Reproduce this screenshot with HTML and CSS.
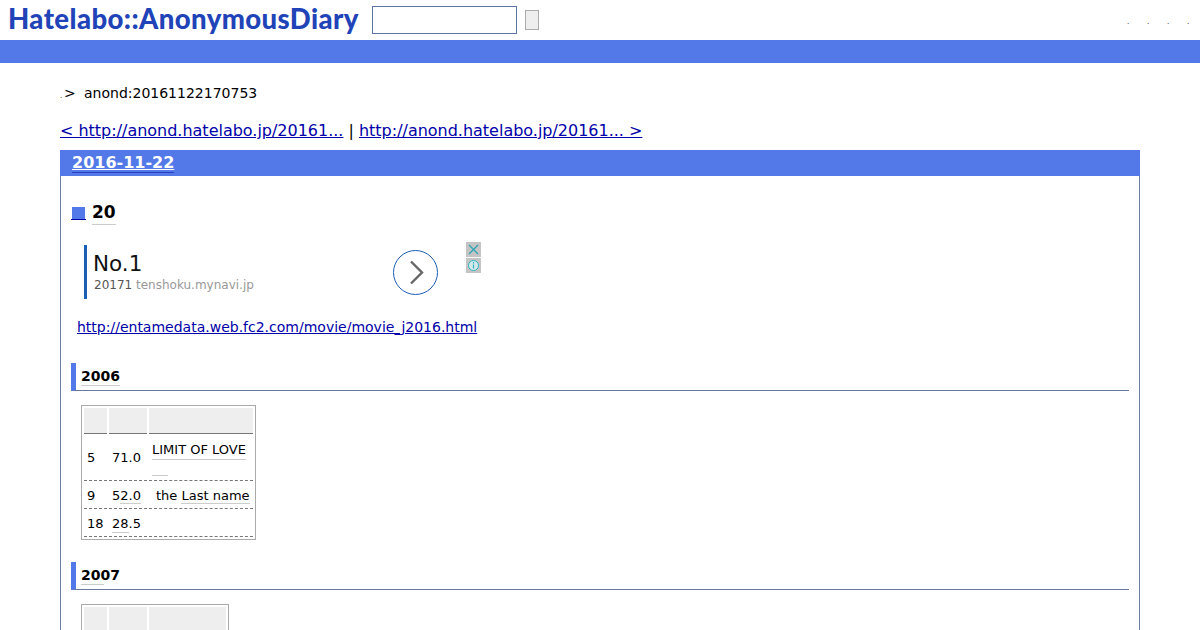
FILE: index.html
```html
<!DOCTYPE html>
<html lang="en">
<head>
    <meta charset="UTF-8">
    <title>anond:20161122170753</title>
    <link rel="stylesheet" href="styles.css">
</head>
<body>
<header class="top">
    <a class="logo" href="#">Hatelabo::AnonymousDiary</a>
    <form class="search">
        <input type="text" class="search-box">
        <button type="button" class="search-btn"></button>
    </form>
    <div class="top-links"><span>.</span><span>.</span><span>.</span><span>.</span></div>
</header>
<div class="bar"></div>

<main class="page">
    <p class="crumb"><span class="dot">.</span><span class="gt">&gt;</span><span>anond:20161122170753</span></p>
    <p class="pager"><a href="#">&lt; http://anond.hatelabo.jp/20161...</a> | <a href="#">http://anond.hatelabo.jp/20161... &gt;</a></p>

    <section class="day">
        <h2 class="day-title"><a href="#">2016-11-22</a></h2>
        <div class="day-body">
            <h3 class="entry-title"><a class="sq" href="#"><i></i></a><span class="kw">20</span></h3>

            <div class="ad">
                <div class="ad-text">
                    <div class="ad-head">No.1</div>
                    <div class="ad-sub">20171 <span class="ad-host">tenshoku.mynavi.jp</span></div>
                </div>
                <div class="ad-go">
                    <svg width="45" height="45" viewBox="0 0 45 45"><circle cx="22.5" cy="22.5" r="22" fill="#fff" stroke="#1a5fb4"/><path d="M18 11.5 L29 22.5 L18 33.5" fill="none" stroke="#666" stroke-width="2.4"/></svg>
                </div>
                <div class="ad-tools">
                    <svg width="15" height="15" viewBox="0 0 15 15"><rect width="15" height="15" fill="#c4c4c4"/><path d="M3 3 L12 12 M12 3 L3 12" stroke="#2aa5b8" stroke-width="1.2"/></svg>
                    <svg width="15" height="15" viewBox="0 0 15 15"><rect width="15" height="15" fill="#c4c4c4"/><circle cx="7.5" cy="7.5" r="5" fill="#d5e8ea" stroke="#2db5c4"/><path d="M7.5 6.5 V10.5 M7.5 4 V5.4" stroke="#2db5c4" stroke-width="1.2"/></svg>
                </div>
            </div>

            <p class="src"><a href="#">http://entamedata.web.fc2.com/movie/movie_j2016.html</a></p>

            <h4 class="year"><span class="kw">2006</span></h4>
            <table class="movies">
                <tr><th class="c1"></th><th class="c2"></th><th class="c3"></th></tr>
                <tr class="tall">
                    <td>5</td><td>71.0</td>
                    <td class="name"><span class="kw">LIMIT OF LOVE</span><i class="stub"></i></td>
                </tr>
                <tr><td>9</td><td>5<span class="kw-part">2.0</span></td><td class="name indent">the <span class="kw-part">Last name</span></td></tr>
                <tr><td>18</td><td><span class="kw-half">28.5</span></td><td></td></tr>
            </table>

            <h4 class="year"><span class="kw-half">2007</span></h4>
            <table class="movies">
                <tr><th class="c1"></th><th class="c2"></th><th class="c3 narrow"></th></tr>
            </table>
        </div>
    </section>
</main>
</body>
</html>
```

FILE: styles.css
```css
:root{
    --blue:#5279e7; --line:#6a7a9c; --link:#0000a8;
}
html,body{height:100%;overflow:hidden;}
body{
    margin:0; background:#fff; color:#000;
    font-family:"DejaVu Sans", sans-serif; font-size:14px;
}
a{color:var(--link);}

.top{display:flex;align-items:center;height:40px;padding-left:8px;}
.logo{
    width:350px;padding-bottom:4px;color:#2143b8;text-decoration:none;white-space:nowrap;
    font-family:Lato, sans-serif;font-weight:900;font-size:27.5px;letter-spacing:.42px;
}
.search{display:flex;align-items:center;margin-left:14px;}
.search-box{
    box-sizing:border-box;width:145px;height:28px;margin:0;padding:0;
    border:1px solid #5a74a8;background:#fff;
}
.search-btn{
    box-sizing:border-box;width:14px;height:20px;margin:0 0 0 8px;padding:0;
    border:1px solid #aaa;background:#eee;
}
.top-links{margin-left:auto;display:flex;gap:19px;padding-right:12px;font-size:7px;line-height:1;align-self:flex-end;padding-bottom:14px;}
.top-links span{width:1px;}

.bar{height:23px;background:var(--blue);}

.page{padding:0 60px;}
.crumb{display:flex;align-items:baseline;margin:21px 0 0;height:18px;line-height:18px;}
.crumb .dot{font-size:7px;width:4px;}
.crumb .gt{width:20px;}
.pager{margin:19px 0 0;font-size:16px;line-height:19px;height:20px;letter-spacing:-.012px;}

.day{margin-top:9px;border:1px solid var(--line);border-top:0;}
.day-title{margin:0 -1px;height:26px;padding-left:12px;background:var(--blue);font-size:16px;line-height:26px;}
.day-title a{color:#fff;box-shadow:0 1px 0 #2a3fc0;}
.day-body{padding:28px 10px 0;}

.entry-title{display:flex;align-items:flex-end;height:21px;margin:0;font-size:17px;line-height:21px;}
.sq{display:block;width:15px;height:14px;margin:0 6px 5px 0;border-bottom:1px solid var(--link);}
.sq i{display:block;width:13px;height:12px;margin:2px 0 0 1px;background:var(--blue);}
.kw{border-bottom:1px solid #ccc;padding-bottom:1px;}
.kw-part{border-bottom:1px solid #ccc;}
.kw-half{background:linear-gradient(#ccc,#ccc) left bottom/60% 1px no-repeat;padding-bottom:2px;}

.ad{display:flex;height:60px;margin:17px 0 0 13px;width:397px;}
.ad-text{box-sizing:border-box;width:309px;height:54px;margin-top:3px;padding-left:6px;border-left:3px solid #1a5fb4;}
.ad-head{font-size:21.5px;line-height:26px;margin-top:6px;color:#111;}
.ad-sub{font-size:12px;line-height:14px;margin-top:1px;padding-left:1px;color:#555;}
.ad-host{color:#999;}
.ad-go{width:73px;padding-top:8px;}
.ad-tools{display:flex;flex-direction:column;gap:1px;}
.ad-tools svg{display:block;}

.src{margin:16px 0 0 6px;line-height:18px;}

.year{
    margin:27px 0 0;height:28px;padding-left:5px;line-height:27px;font-size:14px;
    border-left:5px solid var(--blue);border-bottom:1px solid var(--line);box-sizing:border-box;
}
.movies + .year{margin-top:22px;}
.movies{margin:14px 0 0 10px;border:1px solid #aaa;border-spacing:2px;font-size:13px;}
.movies th{height:25px;padding:0;background:#eee;border-bottom:1px solid #777;}
.movies td{padding:3px;border-bottom:1px dashed #777;line-height:19px;}
.c1{width:23px;} .c2{width:38px;} .c3{width:104px;}
.c3.narrow{width:77px;}
.tall td{height:36px;}
.tall td:not(.name){padding-bottom:5px;}
.movies td.name{white-space:nowrap;}
.name .kw{display:inline-block;line-height:16px;}
.stub{display:block;width:16px;height:1px;margin-top:15px;background:#ccc;}
.indent{padding-left:7px !important;}
```
